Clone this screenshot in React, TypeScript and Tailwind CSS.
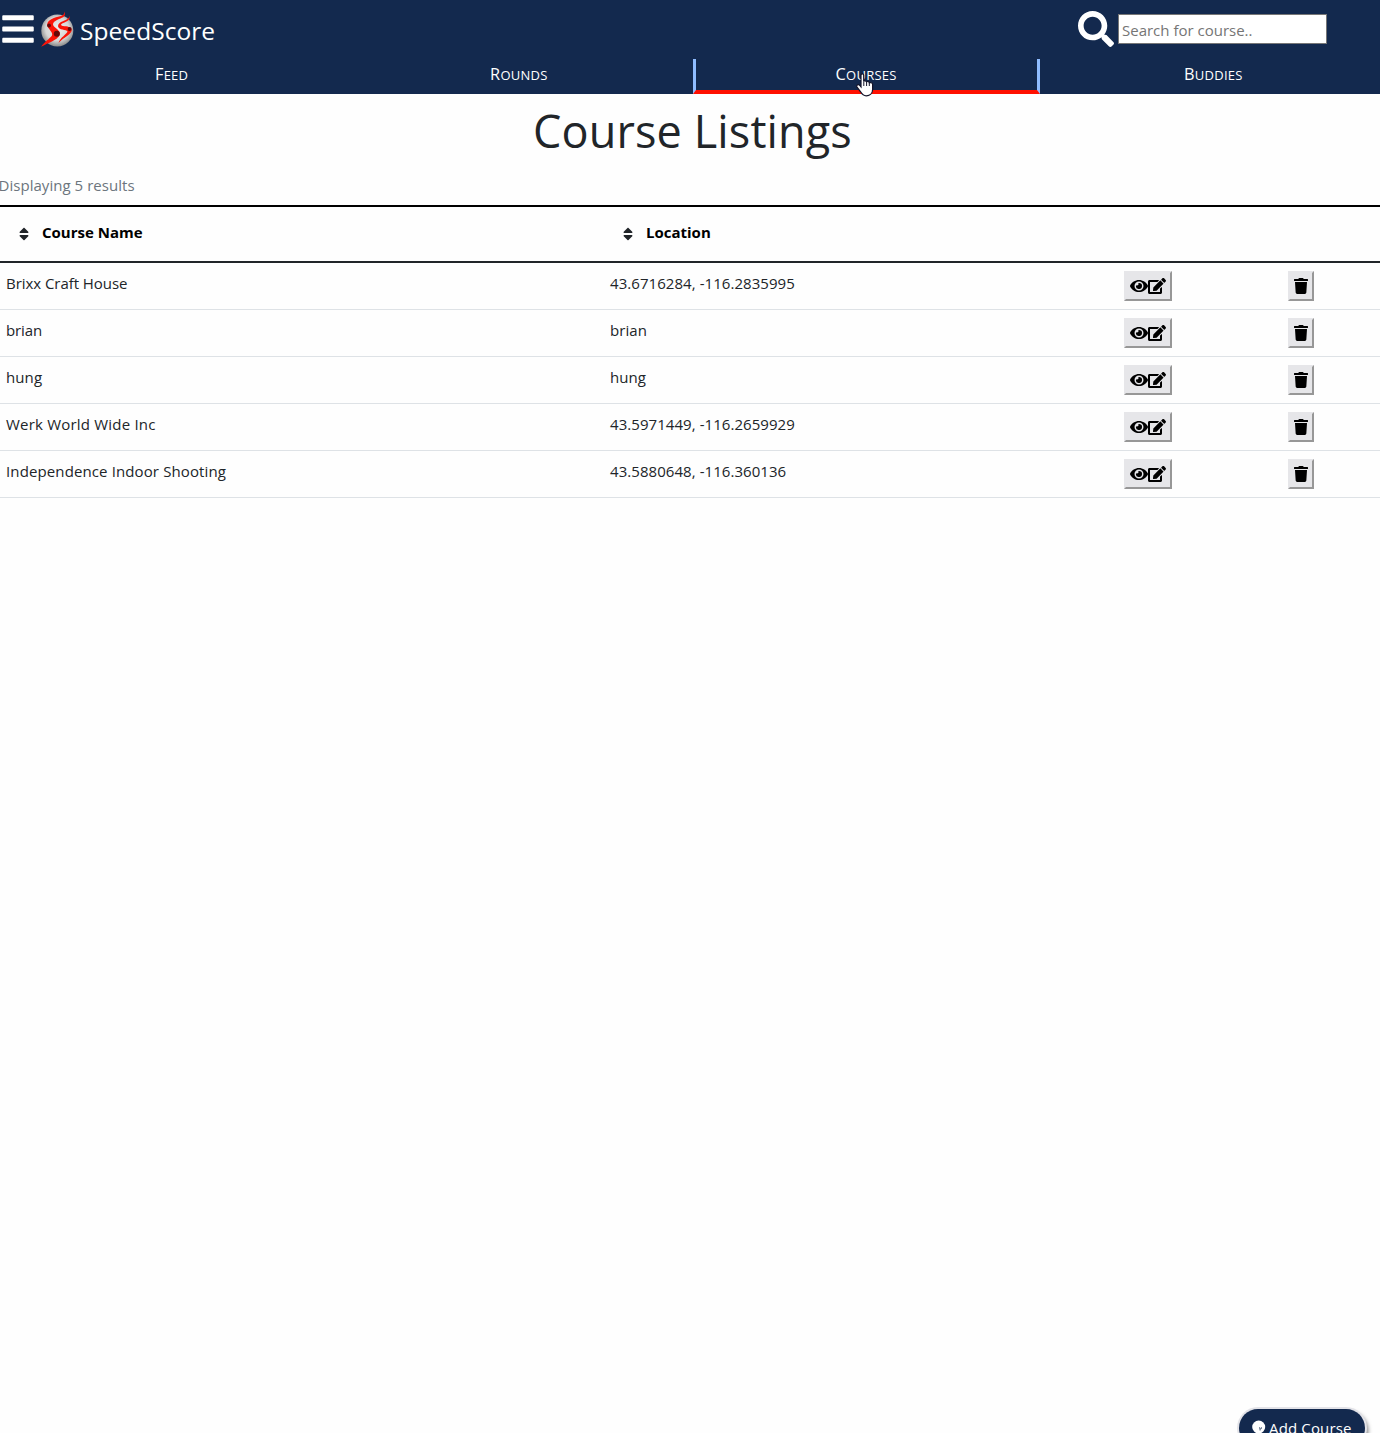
import React from "react";
import { FaBars, FaSearch, FaSort, FaEye, FaEdit, FaTrash } from "react-icons/fa";

const courses = [
  { name: "Brixx Craft House", location: "43.6716284, -116.2835995", nameClass: "tracking-[-0.05px]" },
  { name: "brian", location: "brian", nameClass: "tracking-[-0.1px]" },
  { name: "hung", location: "hung", nameClass: "tracking-[0.1px]" },
  { name: "Werk World Wide Inc", location: "43.5971449, -116.2659929", nameClass: "tracking-[0.2px]" },
  { name: "Independence Indoor Shooting", location: "43.5880648, -116.360136", nameClass: "tracking-[0.12px]" },
];

function Logo() {
  return (
    <svg viewBox="0 0 44 44" className="h-11 w-11">
      <defs>
        <radialGradient id="ball" cx="0.5" cy="0.45" r="0.56">
          <stop offset="0" stopColor="#ececec" />
          <stop offset="0.65" stopColor="#d6d6d6" />
          <stop offset="1" stopColor="#858585" />
        </radialGradient>
      </defs>
      <circle cx="21.3" cy="24.5" r="16" fill="url(#ball)" />
      <path
        d="M28.3 5.2C30.5 10 27 11.5 23 13C17 15.5 16 18 18 20.5C21 23.5 25.5 25.5 23.5 29.5C21 34 12 37 5.2 40.8C8 36 14 32.5 16 29.5C17.5 26 11.5 23 11.2 18.5C11.5 13.5 19 11.5 24 10.3C27.5 9.2 28.6 8 28.3 5.2Z"
        fill="#fb1408"
      />
      <path
        d="M33.5 9.5C34.5 14 31 15.5 28.5 16.5C24.5 18 24 19.3 27 20C31 20.5 35.8 20.5 35.8 24C35.5 28.5 28 31 22.5 37C24 31.5 31 28 31.5 25.5C30.5 23 22.5 24.5 22 20.2C22.5 15.5 28 15.5 31 13.3C33 12 33.5 11 33.5 9.5Z"
        fill="#fb1408"
      />
      <circle cx="13" cy="19.5" r="1.9" fill="#650909" />
      <circle cx="20.8" cy="27.8" r="3" fill="#650909" />
      <circle cx="33.6" cy="23" r="1.9" fill="#650909" />
    </svg>
  );
}

function HandCursor() {
  return (
    <svg viewBox="0 0 18 24" className="absolute left-[160.5px] top-[14px] h-6 w-[18px]">
      <path
        d="M5 2.2C5 .5 7.7.5 7.7 2.2V8.4C8 7.5 10.3 7.6 10.6 9C11.2 8.1 13.2 8.5 13.4 9.8C14.4 9.2 16.6 9.8 16.6 11.4V16.5C16.6 20.3 13.8 22.8 10.2 22.8C7.2 22.8 6 21.3 4.6 18.8L.9 13.9C0 12.2 2.2 10.9 3.5 12.2L5 13.9Z"
        fill="#fff"
        stroke="#14142a"
        strokeWidth="1.2"
      />
      <path d="M7.8 8.5V13M10.6 9.3V13M13.3 10V13" stroke="#14142a" strokeWidth="1" />
    </svg>
  );
}

function SortHeader({ label }: { label: string }) {
  return (
    <th className="p-0 text-left align-top">
      <div className="flex h-[54px] items-center pl-[19px]">
        <FaSort className="mr-[13px] h-4 w-[10px] text-[#212529]" />
        <span className="relative -top-[2px] text-[15px] font-bold leading-6 text-black">{label}</span>
      </div>
    </th>
  );
}

const bevel =
  "flex h-[30px] items-center justify-center border-2 border-t-[#e6e6e9] border-l-[#e6e6e9] border-r-[#979797] border-b-[#979797] bg-[#e6e6e9] text-black";

export default function App() {
  return (
    <div className="relative h-[1433px] w-[1380px] overflow-hidden bg-[#fefefe] font-['Open_Sans',sans-serif] text-[15px] text-[#212529]">
      <header className="h-[94px] bg-[#13294e] text-white">
        <div className="flex h-[59px] items-start">
          <FaBars className="ml-[2px] mt-[11px] h-9 w-8 shrink-0" />
          <div className="ml-[2px] mt-[6px]">
            <Logo />
          </div>
          <span className="mt-[13px] text-[24.5px] leading-9 tracking-[0.05px]">SpeedScore</span>
          <FaSearch className="ml-auto mr-1 mt-[11px] h-9 w-9" />
          <input
            className="mr-[53px] mt-[14px] h-[30px] w-[209px] border border-[#767676] bg-white px-[3px] pt-[1px] text-[15px] text-black placeholder:text-[#757575]"
            placeholder="Search for course.."
          />
        </div>
        <nav className="-ml-[2px] grid h-[35px] w-[1389px] grid-cols-4 text-center text-[18.5px] leading-[27px] tracking-[0.25px] [font-variant:small-caps] [&>div]:first-letter:text-[16.3px]">
          <div>Feed</div>
          <div>Rounds</div>
          <div className="relative border-x-[3px] border-b-4 border-x-[#8fbcff] border-b-[#ff1000]">
            Courses
            <HandCursor />
          </div>
          <div>Buddies</div>
        </nav>
      </header>

      <main>
        <h1 className="ml-[5px] h-[79px] text-center text-[45px] leading-[74px] tracking-[0.12px]">Course Listings</h1>
        <p className="-ml-[1.5px] h-8 leading-6 tracking-[0.04px] text-[#6c757d]">Displaying 5 results</p>
        <table className="w-full table-fixed border-separate border-spacing-0 border-t-2 border-black">
          <colgroup>
            <col className="w-[604px]" />
            <col className="w-[514px]" />
            <col className="w-[164px]" />
            <col />
          </colgroup>
          <thead>
            <tr className="[&>th]:border-b-2 [&>th]:border-[#212529]">
              <SortHeader label="Course Name" />
              <SortHeader label="Location" />
              <th />
              <th />
            </tr>
          </thead>
          <tbody>
            {courses.map((c) => (
              <tr key={c.name} className="h-[47px] [&>td]:border-b [&>td]:border-[#dee2e6] [&>td]:px-[6px] [&>td]:align-top">
                <td className={"pt-[8px] leading-6 " + c.nameClass}>{c.name}</td>
                <td className="pt-[8px] leading-6 tracking-[0.06px]">{c.location}</td>
                <td className="pt-[8px]">
                  <button className={bevel + " w-12"}>
                    <FaEye className="h-4 w-[18px]" />
                    <FaEdit className="h-4 w-[18px]" />
                  </button>
                </td>
                <td className="pt-[8px]">
                  <button className={bevel + " w-[26px]"}>
                    <FaTrash className="h-4 w-[14px]" />
                  </button>
                </td>
              </tr>
            ))}
          </tbody>
        </table>
      </main>

      <button className="absolute left-[1239px] top-[1409px] flex h-[38px] w-[126px] items-center rounded-full bg-[#13294e] pl-[13px] text-[15px] text-white shadow-[0_0_0_2px_#e3e3e8,3px_3px_4px_#777]">
        <svg viewBox="0 0 14 14" className="mr-[3px] mt-[-3px] h-[14px] w-[14px] shrink-0">
          <circle cx="6.7" cy="7" r="6.5" fill="#fff" />
          <path d="M7 8h1.2M9.5 7.5l-.7 1.5M7.5 9.8h1.2" stroke="#13294e" strokeWidth="1" />
        </svg>
        <span className="whitespace-nowrap tracking-[0.15px]">Add Course</span>
      </button>
    </div>
  );
}
